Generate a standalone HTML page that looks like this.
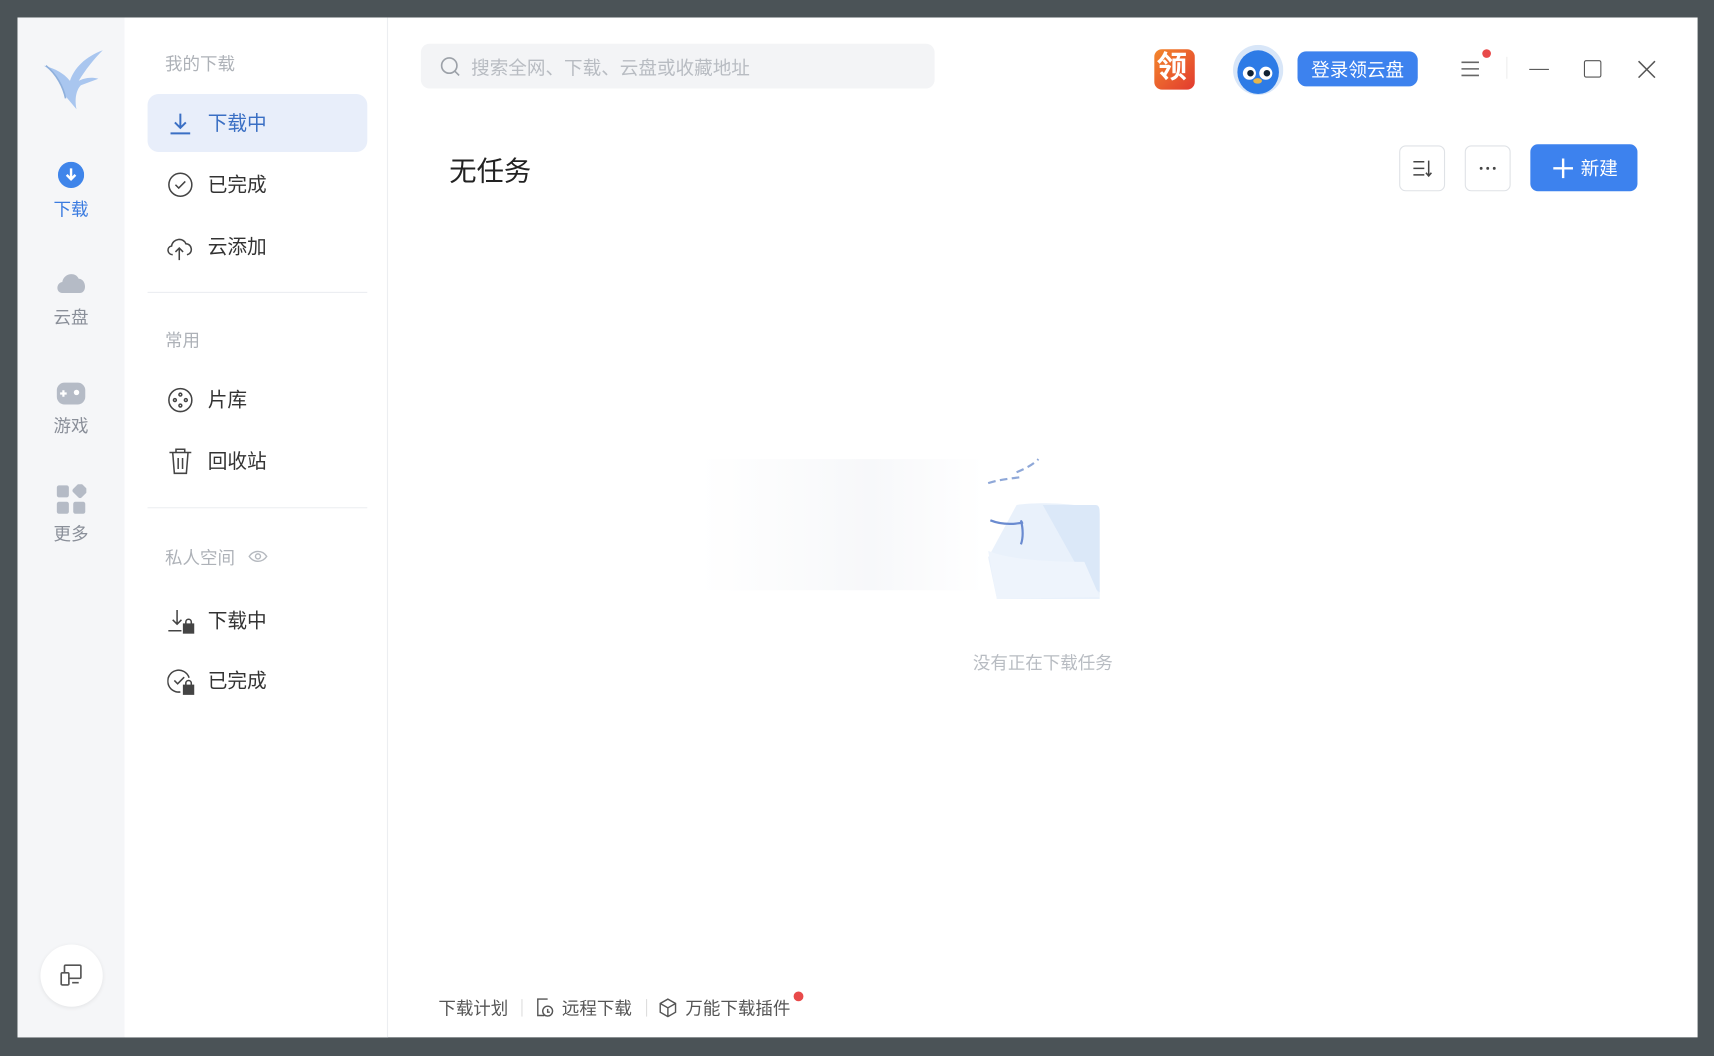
<!DOCTYPE html>
<html><head><meta charset="utf-8"><style>
*{margin:0;padding:0;box-sizing:border-box}
html,body{width:1714px;height:1056px;overflow:hidden;background:#4b5357}
#s{position:absolute;left:0;top:0;width:1568px;height:966px;transform:scale(1.0931);transform-origin:0 0;font-family:"Liberation Sans","Noto Sans CJK SC",sans-serif}
.a{position:absolute}
.win{left:16px;top:16px;width:1537px;height:933px;background:#fff}
.rail{left:16px;top:16px;width:98px;height:933px;background:#f5f6f8}
.side{left:114px;top:16px;width:241px;height:933px;background:#fff;border-right:1px solid #eceef1}
.t{position:absolute;white-space:nowrap;margin-top:-3px}
.it{font-size:18px;color:#333}
.rl{font-size:16px;color:#8a8f99;width:98px;text-align:center;left:16px}
.btn{border:1px solid #dfe2e6;border-radius:6px;background:#fff}
</style></head><body><div id="s">
<div class="a win"></div>
<div class="a rail"></div>
<div class="a side"></div>
<svg class="a" style="left:38px;top:44px" width="60" height="58" viewBox="0 0 60 58"><path d="M56 2 C40 8 30 18 26 30 C20 22 10 18 2 16 C12 22 18 32 22 44 L32 56 C30 46 32 38 36 34 L52 28 C44 26 38 28 34 30 C40 20 48 10 56 2Z" fill="#a9c6ef"/><path d="M4 16 C14 24 20 36 22 46" stroke="#8fb0dc" stroke-width="1.5" fill="none"/></svg>
<svg class="a" style="left:53px;top:148px" width="24" height="24"><circle cx="12" cy="12" r="12" fill="#3f85ea"/><path d="M12 6v10M8 12l4 4 4-4" stroke="#fff" stroke-width="2.2" fill="none"/></svg>
<div class="t rl" style="top:181px;color:#3a7be0">下载</div>
<svg class="a" style="left:51px;top:246px" width="28" height="24"><path d="M6 22 C0 22 0 13 6 12 C7 4 18 2 21 9 C28 9 29 22 22 22Z" fill="#b5bbc6"/></svg>
<div class="t rl" style="top:280px">云盘</div>
<svg class="a" style="left:51px;top:349px" width="28" height="22"><rect x="1" y="1" width="26" height="20" rx="7" fill="#b5bbc6"/><path d="M7 8v6M4 11h6" stroke="#fff" stroke-width="2"/><circle cx="19" cy="10" r="2.5" fill="#fff"/></svg>
<div class="t rl" style="top:379px">游戏</div>
<svg class="a" style="left:51px;top:443px" width="28" height="28"><rect x="1" y="1" width="11" height="11" rx="2" fill="#b5bbc6"/><rect x="16" y="0" width="11" height="11" rx="2" fill="#b5bbc6" transform="rotate(45 21.5 6.5)"/><rect x="1" y="16" width="11" height="11" rx="2" fill="#b5bbc6"/><rect x="16" y="16" width="11" height="11" rx="2" fill="#b5bbc6"/></svg>
<div class="t rl" style="top:478px">更多</div>
<div class="a" style="left:37px;top:864px;width:57px;height:57px;border-radius:50%;background:#fff;box-shadow:0 1px 4px rgba(0,0,0,.08)"></div>
<svg class="a" style="left:53px;top:880px" width="24" height="24" fill="none" stroke="#555" stroke-width="1.5"><rect x="6" y="3" width="15" height="12" rx="1"/><rect x="3" y="10" width="7" height="11" rx="1" fill="#fff"/><path d="M13 19h6"/></svg>
<div class="t" style="left:151px;top:48px;font-size:16px;color:#aeb2b8">我的下载</div>
<div class="a" style="left:135px;top:86px;width:201px;height:53px;border-radius:10px;background:#e8eefa"></div>
<svg class="a" style="left:153px;top:101px" width="24" height="24" stroke="#3a6fc4" stroke-width="1.8" fill="none"><path d="M12 3v13M7 11l5 5 5-5M3 21h18"/></svg>
<div class="t it" style="left:190px;top:102px;color:#3a6fc4">下载中</div>
<svg class="a" style="left:153px;top:157px" width="24" height="24" stroke="#444" stroke-width="1.4" fill="none"><circle cx="12" cy="12" r="10.5"/><path d="M7.5 12l3 3 6-6"/></svg>
<div class="t it" style="left:190px;top:158px">已完成</div>
<svg class="a" style="left:151px;top:214px" width="27" height="26" stroke="#444" stroke-width="1.4" fill="none"><path d="M7 19C2 19 1 12 6 11 C7 4 17 3 19 9 C25 9 26 18 20 19"/><path d="M13 24V13M9.5 16.5L13 13l3.5 3.5"/></svg>
<div class="t it" style="left:190px;top:215px">云添加</div>
<div class="a" style="left:135px;top:267px;width:201px;height:1px;background:#eceef1"></div>
<div class="t" style="left:151px;top:301px;font-size:16px;color:#aeb2b8">常用</div>
<svg class="a" style="left:153px;top:354px" width="24" height="24" stroke="#444" stroke-width="1.4" fill="none"><circle cx="12" cy="12" r="10.5"/><circle cx="12" cy="7" r="1.3"/><circle cx="7" cy="12" r="1.3"/><circle cx="17" cy="12" r="1.3"/><circle cx="12" cy="17" r="1.3"/></svg>
<div class="t it" style="left:190px;top:355px">片库</div>
<svg class="a" style="left:153px;top:409px" width="24" height="26" stroke="#444" stroke-width="1.4" fill="none"><path d="M2 5h20M8 5V2h8v3M5 5l1.5 19h11L19 5M10 10v10M14 10v10"/></svg>
<div class="t it" style="left:190px;top:411px">回收站</div>
<div class="a" style="left:135px;top:464px;width:201px;height:1px;background:#eceef1"></div>
<div class="t" style="left:151px;top:500px;font-size:16px;color:#aeb2b8">私人空间</div>
<svg class="a" style="left:227px;top:502px" width="18" height="14" stroke="#b5b9bf" stroke-width="1.3" fill="none"><path d="M1 7C5 1 13 1 17 7C13 13 5 13 1 7Z"/><circle cx="9" cy="7" r="2.3"/></svg>
<svg class="a" style="left:153px;top:556px" width="26" height="25" stroke="#444" stroke-width="1.4" fill="none"><path d="M9 2v13M5 11l4 4 4-4M1 21h12"/><rect x="15" y="15" width="9" height="8" fill="#444"/><path d="M17 15v-2a2.5 2.5 0 015 0v2"/></svg>
<div class="t it" style="left:190px;top:557px">下载中</div>
<svg class="a" style="left:153px;top:611px" width="26" height="25" stroke="#444" stroke-width="1.4" fill="none"><path d="M20 9A10 10 0 1 0 12 22"/><path d="M6.5 11.5l3 3 6-6"/><rect x="15" y="16" width="9" height="8" fill="#444"/><path d="M17 16v-2a2.5 2.5 0 015 0v2"/></svg>
<div class="t it" style="left:190px;top:612px">已完成</div>
<div class="a" style="left:385px;top:40px;width:470px;height:41px;border-radius:8px;background:#f3f4f6"></div>
<svg class="a" style="left:402px;top:51px" width="20" height="20" stroke="#9ca1a8" stroke-width="1.5" fill="none"><circle cx="9" cy="9" r="7"/><path d="M14 14l4 4"/></svg>
<div class="t" style="left:431px;top:51px;font-size:17px;color:#b8bcc2">搜索全网、下载、云盘或收藏地址</div>
<div class="a" style="left:1056px;top:45px;width:37px;height:37px;border-radius:7px;background:linear-gradient(135deg,#f3872c,#e23a2f)"></div>
<div class="t" style="left:1058px;top:49px;font-size:28px;font-weight:bold;color:#fff;line-height:32px">领</div>
<svg class="a" style="left:1128px;top:41px" width="46" height="46"><circle cx="23" cy="23" r="23" fill="#d8e6f8"/><ellipse cx="23" cy="25" rx="19" ry="20" fill="#2d7be6"/><circle cx="15" cy="26" r="6" fill="#fff"/><circle cx="30" cy="26" r="6" fill="#fff"/><circle cx="16" cy="26" r="3" fill="#123"/><circle cx="31" cy="26" r="3" fill="#123"/><ellipse cx="22.5" cy="33" rx="4" ry="2.5" fill="#e8b64a"/></svg>
<div class="a" style="left:1187px;top:47px;width:110px;height:32px;border-radius:8px;background:#3d82ee"></div>
<div class="t" style="left:1187px;top:53px;width:110px;text-align:center;font-size:17px;color:#fff">登录领云盘</div>
<svg class="a" style="left:1336px;top:53px" width="20" height="20" stroke="#666" stroke-width="1.4"><path d="M1 4h16M1 10h16M1 16h16"/></svg>
<div class="a" style="left:1356px;top:45px;width:8px;height:8px;border-radius:50%;background:#e84a4a"></div>
<div class="a" style="left:1378px;top:52px;width:1px;height:20px;background:#eee"></div>
<div class="a" style="left:1399px;top:63px;width:18px;height:1.4px;background:#555"></div>
<div class="a" style="left:1449px;top:55px;width:16px;height:16px;border:1.4px solid #555;border-radius:2px"></div>
<svg class="a" style="left:1498px;top:55px" width="17" height="17" stroke="#555" stroke-width="1.4"><path d="M1 1l15 15M16 1L1 16"/></svg>
<div class="t" style="left:411px;top:140px;font-size:25px;color:#222">无任务</div>
<div class="a btn" style="left:1280px;top:133px;width:42px;height:42px"></div>
<svg class="a" style="left:1291px;top:144px" width="20" height="20" stroke="#444" stroke-width="1.4" fill="none"><path d="M2 4h10M2 10h10M2 16h10M16 3v14M13.5 14l2.5 3 2.5-3"/></svg>
<div class="a btn" style="left:1340px;top:133px;width:42px;height:42px"></div>
<svg class="a" style="left:1352px;top:152px" width="18" height="4" fill="#444"><circle cx="3" cy="2" r="1.3"/><circle cx="9" cy="2" r="1.3"/><circle cx="15" cy="2" r="1.3"/></svg>
<div class="a" style="left:1400px;top:132px;width:98px;height:43px;border-radius:7px;background:#3d82ee"></div>
<svg class="a" style="left:1420px;top:144px" width="20" height="20" stroke="#fff" stroke-width="2.2"><path d="M10 1v18M1 10h18"/></svg>
<div class="t" style="left:1446px;top:143px;font-size:17px;color:#fff">新建</div>
<div class="a" style="left:640px;top:420px;width:260px;height:120px;background:linear-gradient(90deg,rgba(245,246,248,0),#f7f8fa 60%,rgba(245,246,248,0))"></div>
<svg class="a" style="left:896px;top:418px" width="116" height="136" fill="none"><path d="M8 24 C20 20 30 20 40 18 M34 14 C44 10 50 6 54 2" stroke="#8fa8d8" stroke-width="2" stroke-dasharray="7 4"/><path d="M34 44 C60 40 110 44 110 52 L110 130 L16 130 L8 92 Z" fill="#e9f1fb"/><path d="M58 44 L106 44 C110 44 110 48 110 52 L110 124 L96 112Z" fill="#dbe8f8"/><path d="M8 86 C22 92 50 96 96 96 L110 128 L16 130Z" fill="#eef4fc"/><path d="M10 58 C20 62 30 62 40 60 M38 58 C40 66 40 74 38 80" stroke="#6a8bd0" stroke-width="2"/></svg>
<div class="t" style="left:854px;top:596px;width:200px;text-align:center;font-size:16px;color:#b8bcc2">没有正在下载任务</div>
<div class="t" style="left:401px;top:912px;font-size:16px;color:#555">下载计划</div>
<div class="a" style="left:477px;top:914px;width:1px;height:16px;background:#ddd"></div>
<svg class="a" style="left:489px;top:913px" width="18" height="18" stroke="#555" stroke-width="1.3" fill="none"><path d="M12 1H3v15h6"/><circle cx="12" cy="12" r="4.5"/><path d="M12 10v3h2"/></svg>
<div class="t" style="left:514px;top:912px;font-size:16px;color:#555">远程下载</div>
<div class="a" style="left:591px;top:914px;width:1px;height:16px;background:#ddd"></div>
<svg class="a" style="left:602px;top:913px" width="18" height="18" stroke="#555" stroke-width="1.3" fill="none"><path d="M9 1l7 4v8l-7 4-7-4V5z M2 5l7 4 7-4M9 9v8"/></svg>
<div class="t" style="left:627px;top:912px;font-size:16px;color:#555">万能下载插件</div>
<div class="a" style="left:726px;top:907px;width:9px;height:9px;border-radius:50%;background:#e84a4a"></div>
</div></body></html>
